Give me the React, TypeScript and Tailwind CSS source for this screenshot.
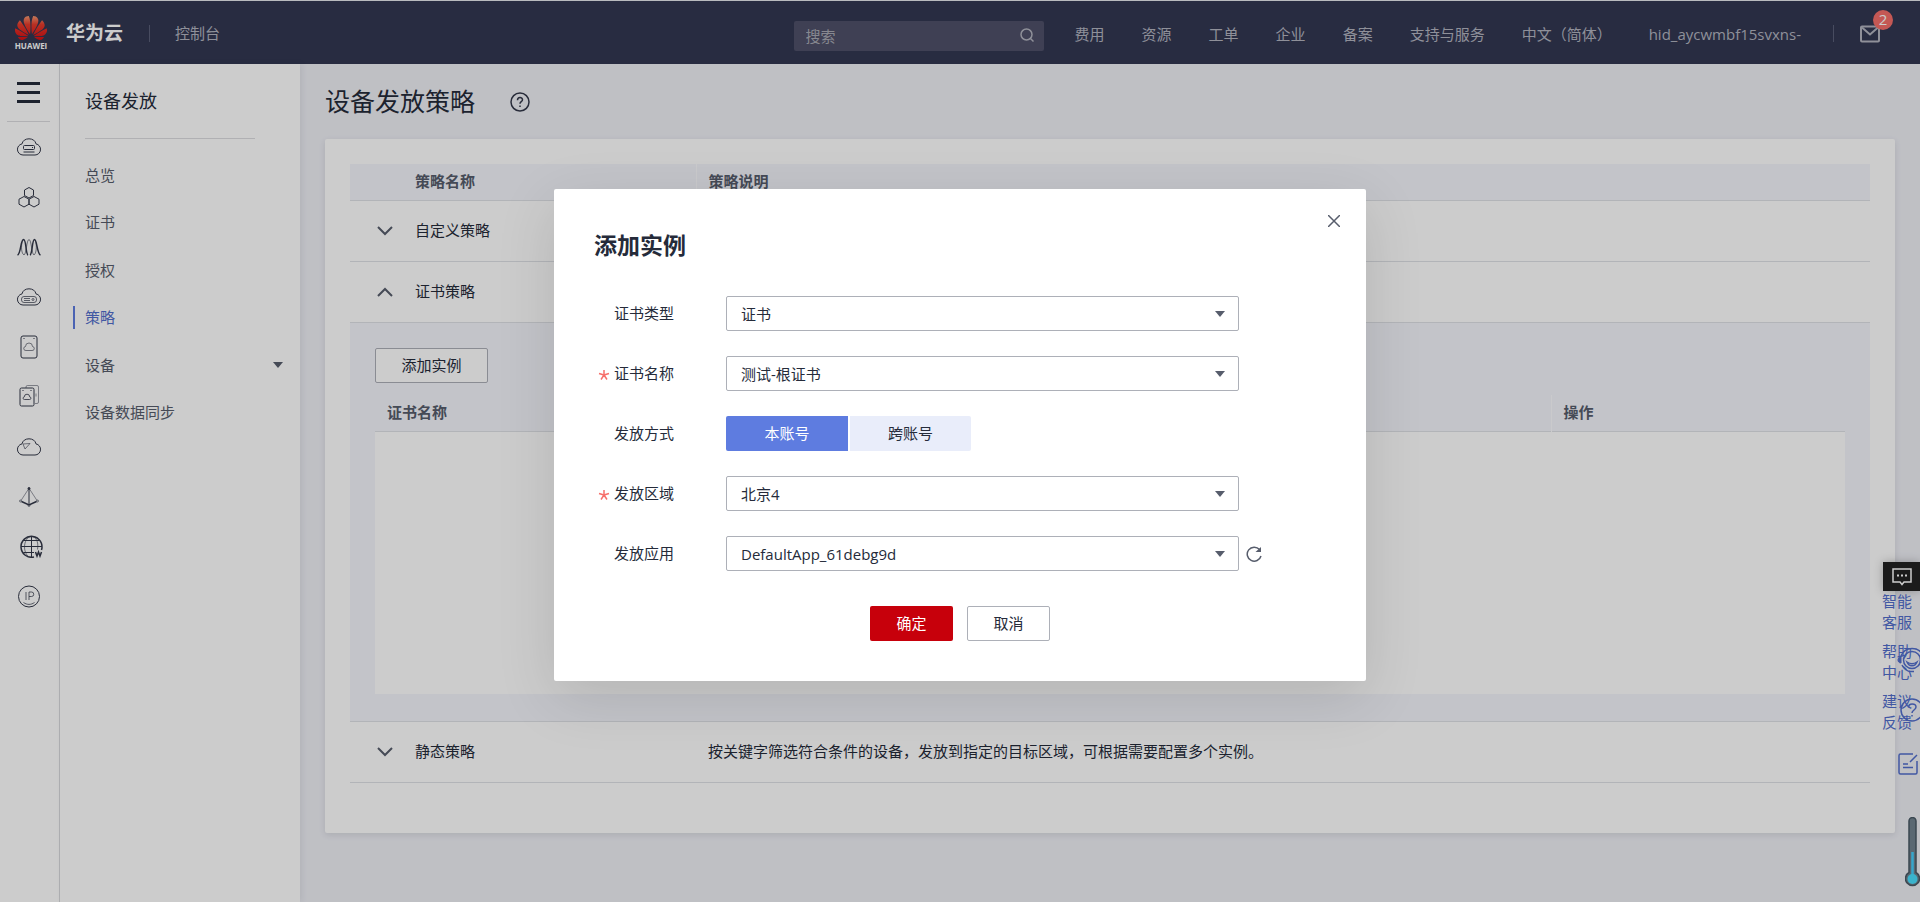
import { useState, type ReactNode } from "react";
import { SiHuawei } from "react-icons/si";

const CLOUD =
  "M10 24h12a5.600 5.600 0 0 0 1-11.100c-.6-3.200-3.400-5.100-7-5.100s-6.400 1.900-7 5.100a5.600 5.600 0 0 0 1 11.100z";

const railIcons: { label: string; art: ReactNode }[] = [
  {
    label: "云服务器",
    art: (
      <>
        <path d={CLOUD} />
        <rect x="10.500" y="14.500" width="11" height="4" rx="1" />
        <path d="M10.500 21h11M19 16.500h1" />
      </>
    ),
  },
  {
    label: "集群",
    art: (
      <>
        <path d="M16 6.500l4.500 2.500v5.500L16 17l-4.500-2.500V9z" />
        <path d="M11 15.500l5 2.700v5l-5 2.800-5-2.800v-5zM21 15.500l5 2.700v5l-5 2.800-5-2.800v-5z" />
      </>
    ),
  },
  {
    label: "弹性伸缩",
    art: (
      <>
        <path d="M4.500 24C8 23 7.500 8.500 10.500 8.500S12.500 23 15 24M17 24c2.500-1 2-15.500 4.500-15.500S24 23 27.500 24" className="stroke-[1.500]" />
        <path
          d="M11 24c-3.500-2-3-13-.5-15.500M11 24c2.500-1 2.500-15.500 5-15.500S18.500 23 21 24c3-2 3-13 .5-15.500"
          className="opacity-60"
        />
      </>
    ),
  },
  {
    label: "裸金属服务器",
    art: (
      <>
        <path d={CLOUD} />
        <rect x="8.500" y="15.500" width="15" height="6" rx="2.500" className="opacity-70" />
        <path d="M11 17.500h6M11 19.500h6" className="opacity-70" />
        <circle cx="20" cy="18.500" r="1" className="opacity-70" />
      </>
    ),
  },
  {
    label: "云硬盘",
    art: (
      <>
        <rect x="8" y="5" width="16" height="22" rx="2" />
        <path d="M10.500 7.500h1M20.500 7.500h1" />
        <path d="M13 19.500h6a2 2 0 0 0 .5-4 3.500 3.500 0 0 0-7 0 2 2 0 0 0 .5 4z" className="opacity-60" />
      </>
    ),
  },
  {
    label: "专属存储",
    art: (
      <>
        <path d="M13 7V6a1.500 1.500 0 0 1 1.500-1.500H24A1.500 1.500 0 0 1 25.500 6v15a1.500 1.500 0 0 1-1.500 1.500h-2" className="opacity-50" />
        <rect x="7" y="7" width="14" height="18" rx="1.500" />
        <path d="M9.500 9.500h1M17.500 9.500h1" />
        <path d="M23 12.500v3" className="opacity-50" />
        <path d="M11.500 18.500h5a1.300 1.300 0 0 0 .2-2.600 2.700 2.700 0 0 0-5.400 0 1.300 1.300 0 0 0 .2 2.600z" className="opacity-80" />
      </>
    ),
  },
  {
    label: "云备份",
    art: (
      <>
        <path d={CLOUD} />
        <path d="M10 13l7-.5-5 5.500z" className="opacity-60" />
      </>
    ),
  },
  {
    label: "虚拟网络",
    art: (
      <>
        <path d="M16 8v15" />
        <path d="M15.500 8L8 19.500M16.500 8L24 19.500" className="opacity-50" />
        <path d="M8.500 20.500l7.500 3.500 7.500-3.500" className="stroke-[1.500]" />
        <circle cx="16" cy="7.500" r="1" fill="currentColor" />
        <circle cx="7.500" cy="20" r="1" className="opacity-60" />
        <circle cx="24.500" cy="20" r="1" className="opacity-60" />
        <circle cx="16" cy="24.500" r="1" className="opacity-60" />
      </>
    ),
  },
  {
    label: "网站服务",
    art: (
      <>
        <path d="M28.500 19a10.500 10.500 0 1 0-7.500 7" className="stroke-[1.500]" />
        <path d="M18.500 5.500v21M8 15.500h21M10.500 9.500h16M10.500 21.500h10.500" />
        <path d="M24.500 18.500c1.500-8-2-13-6-13s-7 5-7 10.500 3 10.500 7 10.500" className="opacity-60" />
        <path d="M22.500 21l1.500 4 1.500-4 1.500 4 1.500-4" className="stroke-[1.500]" />
      </>
    ),
  },
  {
    label: "弹性公网IP",
    art: (
      <>
        <circle cx="16" cy="15.500" r="10.500" />
        <path d="M13 11v8M16 19v-8h2.500a2.200 2.200 0 0 1 0 4.500H16M10.500 21.500c3.500 2.500 7.500 2.500 11 0" className="opacity-75" />
      </>
    ),
  },
];

const topLinks = ["费用", "资源", "工单", "企业", "备案", "支持与服务", "中文（简体）"];
const menu = ["总览", "证书", "授权", "策略", "设备", "设备数据同步"];
const SELECTED = "策略";

function Caret({ className = "" }: { className?: string }) {
  return (
    <svg viewBox="0 0 10 6" aria-hidden="true" className={`h-1.5 w-2.5 fill-[#575d6c] ${className}`}>
      <path d="M0 0h10L5 6z" />
    </svg>
  );
}

function Chevron({ up = false }: { up?: boolean }) {
  return (
    <svg viewBox="0 0 16 10" aria-hidden="true" className="h-2.5 w-4 fill-none stroke-[#575d6c] stroke-2">
      <path d={up ? "M1 9l7-7 7 7" : "M1 1l7 7 7-7"} />
    </svg>
  );
}

function Header() {
  return (
    <header className="flex h-16 items-center border-t border-[#e8eaee] bg-[#323752] pt-0.5 text-[15px] text-[#b3b5c0]">
      <a href="#home" className="ml-[15px] flex w-8 flex-col items-center">
        <svg width="0" height="0" aria-hidden="true" className="absolute">
          <defs>
            <linearGradient id="petals" x1="0.500" y1="0" x2="0.500" y2="1">
              <stop offset="0" stopColor="#f39a72" />
              <stop offset="0.350" stopColor="#e83c2c" />
              <stop offset="1" stopColor="#d80f14" />
            </linearGradient>
          </defs>
        </svg>
        <SiHuawei aria-hidden="true" className="-my-1 size-8 fill-[url(#petals)]" />
        <span className="text-[8px] leading-[12px] font-bold text-white">HUAWEI</span>
      </a>
      <span className="ml-[19px] text-[19px] font-bold text-white">华为云</span>
      <span className="ml-[26px] h-[17px] w-px bg-[#5a5f78]" />
      <a href="#console" className="ml-[25px]">控制台</a>
      <div className="ml-auto flex items-center">
        <div className="mt-[5px] flex h-[30px] w-[250px] items-center rounded-xs bg-[#4f5069] px-3">
          <input
            type="text"
            aria-label="搜索"
            placeholder="搜索"
            className="min-w-0 flex-1 bg-transparent outline-none placeholder:text-[#a9aab4]"
          />
          <svg viewBox="0 0 14 14" aria-hidden="true" className="-mt-0.5 -mr-0.5 size-3.5 fill-none stroke-[#b3b5c0] stroke-[1.500]">
            <circle cx="6.500" cy="6.500" r="5.500" />
            <path d="M10 10l3.500 3.500" />
          </svg>
        </div>
        <nav className="ml-[31px] flex items-center gap-[37px] pt-0.5">
          {topLinks.map((t) => (
            <a key={t} href="#nav">{t}</a>
          ))}
          <a href="#account">hid_aycwmbf15svxns-</a>
        </nav>
        <span className="ml-8 h-[17px] w-px bg-[#5a5f78]" />
        <button type="button" aria-label="消息" className="relative mr-10 ml-[26px]">
          <svg viewBox="0 0 20 18" aria-hidden="true" className="h-[18px] w-5 fill-none stroke-[#b3b5c0] stroke-2">
            <rect x="1" y="1.500" width="18" height="15" rx="1" />
            <path d="M2 2.500l8 7 8-7" />
          </svg>
          <span className="absolute -top-[15px] left-[13px] flex size-5 items-center justify-center rounded-full bg-[#f66f6a] text-[15px] text-white">
            2
          </span>
        </button>
      </div>
    </header>
  );
}

function IconRail() {
  return (
    <nav aria-label="服务" className="flex w-[60px] shrink-0 flex-col items-center border-r border-[#dcdde0] bg-white pr-0.5 text-[#333849]">
      <button type="button" aria-label="展开菜单" className="flex h-[57px] w-full flex-col items-center justify-center gap-1.5">
        <span className="h-[3px] w-[23px] bg-[#252b3a]" />
        <span className="h-[3px] w-[23px] bg-[#252b3a]" />
        <span className="h-[3px] w-[23px] bg-[#252b3a]" />
      </button>
      <span className="h-px w-[43px] bg-[#dcdde0]" />
      {railIcons.map((i) => (
        <a key={i.label} href="#service" aria-label={i.label} className="flex h-[50px] items-center">
          <svg viewBox="0 0 32 32" aria-hidden="true" className="size-8 fill-none stroke-current">
            {i.art}
          </svg>
        </a>
      ))}
    </nav>
  );
}

function SideMenu() {
  return (
    <aside className="w-60 shrink-0 bg-white px-[25px] shadow-[2px_0_6px_rgba(41,48,64,0.08)]">
      <h2 className="flex h-[75px] w-[170px] items-center border-b border-[#dcdde0] text-[18px] text-[#252b3a]">设备发放</h2>
      <ul className="mt-3 grid h-[285px] grid-rows-6 text-[15px] text-[#575d6c]">
        {menu.map((m) => (
          <li key={m} className="flex items-center">
            <a
              href="#menu"
              className={
                m === SELECTED
                  ? "-ml-3 flex w-full items-center border-l-2 border-[#5e7ce0] pl-2.5 text-[#526ecc]"
                  : "flex w-full items-center justify-between"
              }
            >
              {m}
              {m === "设备" && <Caret className="-mr-2" />}
            </a>
          </li>
        ))}
      </ul>
    </aside>
  );
}

function PolicyRow({ name, desc, open = false }: { name: string; desc?: string; open?: boolean }) {
  return (
    <tr className="h-[61px] border-b border-[#dfe1e6] text-[#252b3a]">
      <td className="pl-[27px]">
        <button type="button" aria-label={name} aria-expanded={open} className="flex items-center">
          <Chevron up={open} />
        </button>
      </td>
      <td className="pl-[13px]">{name}</td>
      <td className="pl-3">{desc}</td>
    </tr>
  );
}

function PolicyTable() {
  return (
    <table className="w-full table-fixed border-collapse text-[15px]">
      <colgroup>
        <col className="w-[52px]" />
        <col className="w-[294px]" />
        <col />
      </colgroup>
      <thead>
        <tr className="h-9 border-b border-[#dfe1e6] bg-[#f4f5fc] text-left text-[#575d6c]">
          <th aria-label="展开" />
          <th className="pb-0.5 pl-[13px] font-bold">策略名称</th>
          <th className="border-l border-[#fdfdff] pb-0.5 pl-3 font-bold">策略说明</th>
        </tr>
      </thead>
      <tbody>
        <PolicyRow name="自定义策略" />
        <PolicyRow name="证书策略" open />
        <tr className="border-b border-[#dfe1e6] bg-[#f4f5fc]">
          <td colSpan={3} className="px-[25px] pt-[25px] pb-[27px]">
            <button type="button" className="block h-[35px] w-[113px] rounded-xs border border-[#adb0b8] bg-white text-[#252b3a]">
              添加实例
            </button>
            <table className="mt-3 w-full table-fixed border-collapse">
              <thead>
                <tr className="h-[37px] border-b border-[#dfe1e6] text-left text-[#575d6c]">
                  <th className="pb-0.5 pl-3 font-bold">证书名称</th>
                  <th className="w-[20%] border-l border-[#fdfdff] pb-0.5 pl-3 font-bold">操作</th>
                </tr>
              </thead>
              <tbody>
                <tr className="h-[262px] bg-white">
                  <td colSpan={2} />
                </tr>
              </tbody>
            </table>
          </td>
        </tr>
        <PolicyRow name="静态策略" desc="按关键字筛选符合条件的设备，发放到指定的目标区域，可根据需要配置多个实例。" />
      </tbody>
    </table>
  );
}

function FloatingTools() {
  return (
    <div className="absolute top-[562px] right-0 w-[37px] text-[15px] leading-[21px] text-[#526ecc]">
      <button type="button" aria-label="在线咨询" className="flex h-[29px] w-full items-center justify-center bg-[#222] shadow-[0_0_10px_rgba(0,0,0,0.25)]">
        <svg viewBox="0 0 20 18" aria-hidden="true" className="h-[18px] w-5 fill-none stroke-white stroke-[1.500]">
          <path d="M1 1h18v13h-7l-2 2.500L8 14H1z" />
          <path d="M5 7.500h2M9 7.500h2M13 7.500h2" className="stroke-2" />
        </svg>
      </button>
      <a href="#service" className="-ml-px block w-[30px]">智能客服</a>
      <a href="#help" className="relative mt-2 -ml-px block w-[30px]">
        帮助中心
        <svg viewBox="0 0 26 26" aria-hidden="true" className="absolute top-1.5 left-[15px] size-[26px] fill-none stroke-current">
          <circle cx="15" cy="13" r="8.500" className="stroke-[1.500]" />
          <path d="M4 9C6 4 10 1.500 15 1.500s9 2.500 11 7M10 15c2 5 8 5 10 0-3 2-7 2-10 0z" className="stroke-[1.500]" />
          <path d="M4 10c-4 0-4 6 0 6z" className="fill-current" />
          <path d="M5 18c2 4 5 6.500 9 6.500h3" className="stroke-[1.500]" />
        </svg>
      </a>
      <a href="#feedback" className="relative mt-2 -ml-px block w-[30px]">
        建议反馈
        <svg viewBox="0 0 24 24" aria-hidden="true" className="absolute top-[7px] left-[18px] size-6 fill-none stroke-current stroke-[1.500]">
          <circle cx="12" cy="12" r="11" />
          <path d="M8.500 9.500c0-5 7.500-4.500 7.500-.5 0 3-4 3-4 6M12 17v1.500" />
        </svg>
      </a>
      <a href="#survey" aria-label="问卷" className="mt-5 ml-[15px] block">
        <svg viewBox="0 0 20 22" aria-hidden="true" className="h-[22px] w-5 fill-none stroke-current stroke-[1.500]">
          <path d="M15 1H2.500A1.500 1.500 0 0 0 1 2.500v17A1.500 1.500 0 0 0 2.500 21h15a1.500 1.500 0 0 0 1.500-1.500V8M19 2l-7 7M5 11h5M5 14.500h10" />
        </svg>
      </a>
      <svg viewBox="0 0 16 70" aria-hidden="true" className="mt-[42px] ml-[22px] h-[70px] w-4">
        <path d="M4 4a3.500 3.500 0 0 1 7 0v51.500a7 7 0 1 1-7 0z" className="fill-[#71838f] stroke-[#4a5a66] stroke-[1.500]" />
        <path d="M7.500 35v26" className="stroke-[#44d0ff] stroke-[2.500]" />
        <circle cx="7.500" cy="62" r="5" className="fill-[#49e0ff]" />
      </svg>
    </div>
  );
}

function Field({ id, label, required = false, children }: { id: string; label: string; required?: boolean; children: ReactNode }) {
  return (
    <div className="flex h-[35px] items-center">
      <label htmlFor={id} className="flex w-[132px] items-center text-[#252b3a]">
        <span className="w-5 pl-1 text-[#f66f6a]">
          {required && (
            <svg viewBox="0 0 12 12" aria-hidden="true" className="mt-0.5 size-3 fill-none stroke-current stroke-[1.500]">
              <path d="M6 6V1M6 6L1 4.500M6 6l5-1.500M6 6l-3 4.500M6 6l3 4.500" />
            </svg>
          )}
        </span>
        {label}
      </label>
      {children}
    </div>
  );
}

function Picker({ id, value }: { id: string; value: string }) {
  return (
    <div className="relative w-[513px]">
      <select
        id={id}
        defaultValue={value}
        className="block h-[35px] w-full appearance-none rounded-xs border border-[#adb0b8] bg-white px-3.5 pt-0.5 text-[#252b3a] outline-none"
      >
        <option>{value}</option>
      </select>
      <Caret className="pointer-events-none absolute top-[15px] right-3.5" />
    </div>
  );
}

function AddInstanceDialog() {
  const [cross, setCross] = useState(false);
  const on = "bg-[#5e7ce0] text-white";
  const off = "bg-[#e9edfa] text-[#252b3a]";
  return (
    <div className="absolute inset-0 flex items-start justify-center bg-black/20 pt-[189px]">
      <section
        role="dialog"
        aria-modal="true"
        aria-labelledby="dialog-title"
        className="relative w-[812px] rounded-xs bg-white px-10 pt-10 pb-10 text-[15px] shadow-[0_16px_60px_rgba(0,0,0,0.12)]"
      >
        <button type="button" aria-label="关闭" className="absolute top-[26px] right-[26px]">
          <svg viewBox="0 0 12 12" aria-hidden="true" className="size-3 fill-none stroke-[#575d6c] stroke-[1.500]">
            <path d="M0 0l12 12M12 0L0 12" />
          </svg>
        </button>
        <h2 id="dialog-title" className="text-[23px] leading-[32px] font-bold text-[#252b3a]">添加实例</h2>
        <form className="mt-[35px] flex flex-col gap-[25px]" onSubmit={(e) => e.preventDefault()}>
          <Field id="cert-type" label="证书类型">
            <Picker id="cert-type" value="证书" />
          </Field>
          <Field id="cert-name" label="证书名称" required>
            <Picker id="cert-name" value="测试-根证书" />
          </Field>
          <Field id="own-account" label="发放方式">
            <div className="flex gap-0.5">
              <button id="own-account" type="button" aria-pressed={!cross} onClick={() => setCross(false)} className={`h-[35px] w-[122px] rounded-l-xs ${cross ? off : on}`}>
                本账号
              </button>
              <button type="button" aria-pressed={cross} onClick={() => setCross(true)} className={`h-[35px] w-[121px] rounded-r-xs ${cross ? on : off}`}>
                跨账号
              </button>
            </div>
          </Field>
          <Field id="region" label="发放区域" required>
            <Picker id="region" value="北京4" />
          </Field>
          <Field id="app" label="发放应用">
            <Picker id="app" value="DefaultApp_61debg9d" />
            <button type="button" aria-label="刷新" className="ml-[7px]">
              <svg viewBox="0 0 16 16" aria-hidden="true" className="size-4 fill-none stroke-[#575d6c] stroke-[1.500]">
                <path d="M13.500 3.500A7 7 0 1 0 15 10" />
                <path d="M15 1v5H9.500z" className="fill-[#575d6c] stroke-none" />
              </svg>
            </button>
          </Field>
          <div className="mt-2.5 flex justify-center gap-3.5">
            <button type="submit" className="h-[35px] w-[83px] rounded-xs bg-[#c7000b] text-white">确定</button>
            <button type="button" className="h-[35px] w-[83px] rounded-xs border border-[#adb0b8] bg-white text-[#252b3a]">取消</button>
          </div>
        </form>
      </section>
    </div>
  );
}

export default function App() {
  return (
    <div className="relative flex min-h-screen flex-col overflow-hidden bg-[#eff0f6] font-['Open_Sans','Noto_Sans_CJK_SC',sans-serif]">
      <Header />
      <div className="flex flex-1">
        <IconRail />
        <SideMenu />
        <main className="min-w-0 flex-1 px-[25px] pb-10">
          <div className="flex h-[75px] items-center gap-[35px]">
            <h1 className="text-[25px] text-[#252b3a]">设备发放策略</h1>
            <button type="button" aria-label="帮助">
              <svg viewBox="0 0 20 20" aria-hidden="true" className="size-5 fill-none stroke-[#333849] stroke-[1.500]">
                <circle cx="10" cy="10" r="9" />
                <path d="M7.500 8.200c0-3.600 5-3.400 5-.5 0 2-2.500 2-2.500 4M10 13.500v1.500" />
              </svg>
            </button>
          </div>
          <div className="rounded-xs bg-white px-[25px] pt-[25px] pb-[50px] shadow-[0_2px_6px_rgba(41,48,64,0.12)]">
            <PolicyTable />
          </div>
        </main>
      </div>
      <FloatingTools />
      <AddInstanceDialog />
    </div>
  );
}
